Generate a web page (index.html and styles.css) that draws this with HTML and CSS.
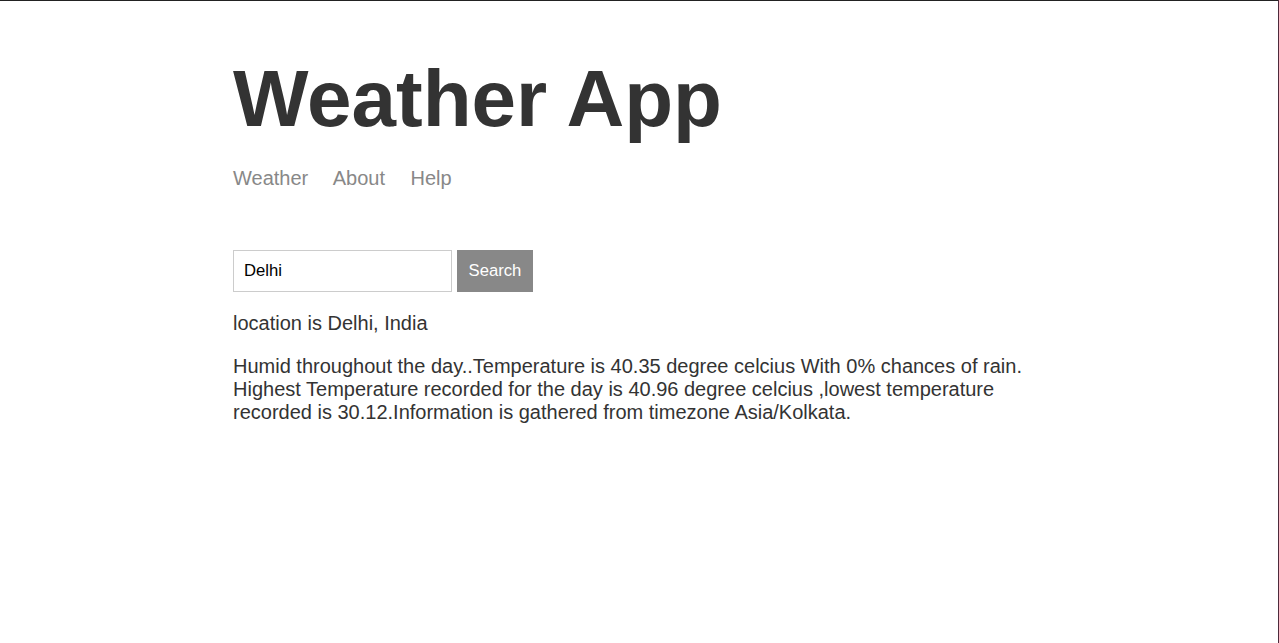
FILE: index.html
```html
<!DOCTYPE html>
<html lang="en">
<head>
<meta charset="utf-8">
<title>Weather App</title>
<link rel="stylesheet" href="styles.css">
</head>
<body>
<div class="frame-top"></div>
<div class="frame-right"></div>
<div class="main-content">
  <header class="site-header">
    <h1 class="title">Weather App</h1>
    <nav class="nav">
      <a class="nav-link" href="#">Weather</a>
      <a class="nav-link" href="#">About</a>
      <a class="nav-link" href="#">Help</a>
    </nav>
  </header>
  <form class="search-form">
    <input class="search-input" type="text" value="Delhi" placeholder="Location">
    <button class="search-button" type="button">Search</button>
  </form>
  <p class="message">location is Delhi, India</p>
  <p class="message">Humid throughout the day..Temperature is 40.35 degree celcius With 0% chances of rain. Highest Temperature recorded for the day is 40.96 degree celcius ,lowest temperature recorded is 30.12.Information is gathered from timezone Asia/Kolkata.</p>
</div>
</body>
</html>
```

FILE: styles.css
```css
html, body {
  margin: 0;
  padding: 0;
  background: #ffffff;
}

body {
  color: #333333;
  font-family: "Liberation Sans", Arial, sans-serif;
  font-size: 20px;
}

.frame-top {
  position: fixed;
  top: 0;
  left: 0;
  right: 0;
  height: 1px;
  background: #222222;
  z-index: 10;
}

.frame-right {
  position: fixed;
  top: 0;
  bottom: 0;
  right: 0;
  width: 1px;
  background: #4d2a3c;
  z-index: 10;
}

.main-content {
  max-width: 813px;
  margin: 0 auto;
  padding: 1px 20px 0;
}

.site-header {
  margin-top: 52px;
  margin-bottom: 60px;
}

.title {
  font-size: 80px;
  font-weight: bold;
  line-height: 92px;
  margin: 0 0 22px;
}

.nav {
  line-height: 23px;
}

.nav-link {
  color: #888888;
  text-decoration: none;
  margin-right: 20px;
  font-size: 20px;
}

.search-form {
  display: flex;
  gap: 5px;
  margin: 0;
}

.search-input {
  box-sizing: border-box;
  width: 219px;
  height: 42px;
  border: 1px solid #cccccc;
  padding: 0 10px;
  font-family: "Liberation Sans", Arial, sans-serif;
  font-size: 16.67px;
  color: #000000;
  outline: none;
  margin: 0;
}

.search-button {
  box-sizing: border-box;
  width: 76px;
  height: 42px;
  border: 1px solid #888888;
  background: #888888;
  color: #ffffff;
  font-family: "Liberation Sans", Arial, sans-serif;
  font-size: 16.67px;
  padding: 0 10px;
  margin: 0;
}

.message {
  margin: 20px 0;
  line-height: 23px;
  font-size: 20px;
}
```
